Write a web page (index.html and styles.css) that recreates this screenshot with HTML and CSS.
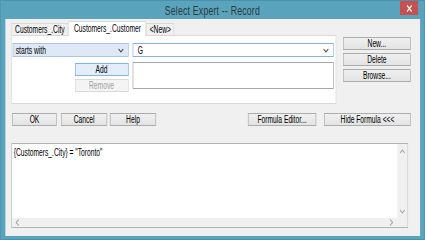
FILE: index.html
```html
<!DOCTYPE html>
<html>
<head>
  <title>Select Expert -- Record</title>
  <link rel="stylesheet" href="styles.css">
</head>
<body>
  <div class="screen">
    <div class="window">
      <div class="titlebar">
        <span class="title">Select Expert -- Record</span>
        <span class="close">
          <svg width="10" height="7" viewBox="0 0 10 7"><path d="M1.5 0.5 L8.5 6.5 M8.5 0.5 L1.5 6.5" stroke="#fff" stroke-width="1.6"/></svg>
        </span>
      </div>

      <div class="client">
        <div class="top">
          <div class="tabbox">
            <div class="tabs">
              <div class="tab">Customers_.City</div>
              <div class="tab active">Customers_.Customer</div>
              <div class="tab tab-new">&lt;New&gt;</div>
            </div>
            <div class="panel">
              <div class="row">
                <div class="combo">
                  <span>starts with</span>
                  <svg class="chev" width="9" height="5" viewBox="0 0 9 5"><polyline points="1,1 4.5,4 8,1" fill="none" stroke="#444" stroke-width="1.2"/></svg>
                </div>
                <div class="field">
                  <span>G</span>
                  <svg class="chev" width="9" height="5" viewBox="0 0 9 5"><polyline points="1,1 4.5,4 8,1" fill="none" stroke="#444" stroke-width="1.2"/></svg>
                </div>
              </div>
              <div class="row row-list">
                <div class="add-col">
                  <button class="btn btn-default add-btn">Add</button>
                  <button class="btn btn-disabled add-btn remove-btn">Remove</button>
                </div>
                <div class="listbox"></div>
              </div>
            </div>
          </div>

          <div class="side">
            <button class="btn">New...</button>
            <button class="btn">Delete</button>
            <button class="btn">Browse...</button>
          </div>
        </div>

        <div class="actions">
          <button class="btn btn-ok">OK</button>
          <button class="btn btn-cancel">Cancel</button>
          <button class="btn btn-help">Help</button>
          <button class="btn btn-formula">Formula Editor...</button>
          <button class="btn btn-hide">Hide Formula &lt;&lt;&lt;</button>
        </div>

        <div class="formula">
          <div class="formula-text">{Customers_.City} = "Toronto"</div>
          <div class="vscroll">
            <svg width="9" height="5" viewBox="0 0 9 5"><polyline points="1,4 4.5,1 8,4" fill="none" stroke="#a6a6a6" stroke-width="1.2"/></svg>
            <svg width="9" height="5" viewBox="0 0 9 5"><polyline points="1,1 4.5,4 8,1" fill="none" stroke="#a6a6a6" stroke-width="1.2"/></svg>
          </div>
          <div class="hscroll">
            <svg width="6" height="7" viewBox="0 0 6 7"><polyline points="5,0.5 1,3.5 5,6.5" fill="none" stroke="#a6a6a6" stroke-width="1.2"/></svg>
            <svg width="6" height="7" viewBox="0 0 6 7"><polyline points="1,0.5 5,3.5 1,6.5" fill="none" stroke="#a6a6a6" stroke-width="1.2"/></svg>
          </div>
          <div class="corner"></div>
        </div>
      </div>
    </div>
  </div>
</body>
</html>
```

FILE: styles.css
```css
html, body {
  margin: 0;
  height: 100%;
  overflow: hidden;
  background-color: #5aa3bc;
}

body {
  font-family: "Liberation Sans", Arial, sans-serif;
  font-size: 10px;
  color: #000;
}

.screen {
  width: 425px;
  height: 240px;
  overflow: hidden;
}

/* the dialog is drawn at its natural size and squeezed to the narrow capture */
.window {
  width: 634px;
  height: 240px;
  box-sizing: border-box;
  background-color: #5aa3bc;
  border: 1px solid #4a92aa;
  display: flex;
  flex-direction: column;
  transform: scaleX(0.67);
  transform-origin: 0 0;
}

.titlebar {
  height: 18px;
  display: grid;
  grid-template-columns: 1fr auto 1fr;
  align-items: start;
}

.title {
  grid-column: 2;
  font-size: 13px;
  line-height: 19px;
  color: #2b3a40;
  letter-spacing: 0.3px;
}

.close {
  grid-column: 3;
  justify-self: end;
  width: 27px;
  height: 14px;
  margin-right: 9px;
  background-color: #c75050;
  display: flex;
  align-items: center;
  justify-content: center;
}

.client {
  height: 217px;
  margin: 0 6px 0 6.5px;
  padding: 3px 14px 0 9px;
  box-sizing: border-box;
  background-color: #f0f0f0;
}

.top {
  display: flex;
  align-items: flex-start;
}

.tabbox {
  width: 485px;
}

.tabs {
  display: flex;
  align-items: flex-end;
  height: 13px;
  position: relative;
  z-index: 1;
}

.tab {
  height: 11px;
  line-height: 11px;
  padding: 0 5px;
  border: 1px solid #d9d9d9;
  border-bottom: none;
  background-color: #f0f0f0;
  white-space: nowrap;
}

.tab.active {
  height: 14px;
  line-height: 13px;
  padding: 0 7px;
  background-color: #fff;
  margin-bottom: -1px;
}

.tab-new {
  padding: 0 4px;
}

.panel {
  height: 69px;
  box-sizing: border-box;
  border: 1px solid #d9d9d9;
  background-color: #fff;
  padding: 7px 3px 0 1px;
}

.row {
  display: grid;
  grid-template-columns: 173px 300px;
  column-gap: 6px;
}

.row-list {
  margin-top: 5px;
}

.combo, .field {
  height: 14px;
  box-sizing: border-box;
  display: flex;
  align-items: center;
  justify-content: space-between;
  padding: 0 6px 0 4px;
}

.combo {
  background-color: #dfe9f5;
  border: 1px solid #a9c6e6;
}

.field {
  background-color: #fff;
  border: 1px solid #7eb4ea;
  padding-left: 7px;
}

.add-col {
  display: flex;
  flex-direction: column;
  align-items: flex-end;
  padding-top: 1px;
}

.listbox {
  height: 27px;
  box-sizing: border-box;
  border: 1px solid #a6a6a6;
  background-color: #fff;
}

.btn {
  box-sizing: border-box;
  height: 13px;
  padding: 0;
  border: 1px solid #acacac;
  background: linear-gradient(#f0f0f0, #e3e3e3);
  font-family: inherit;
  font-size: 10px;
  line-height: 11px;
  color: #000;
}

.btn-default {
  border-color: #7eb4ea;
  background: #e3eefa;
}

.btn-disabled {
  border-color: #d9d9d9;
  background: #f4f4f4;
  color: #a0a0a0;
}

.add-btn {
  width: 80px;
}

.remove-btn {
  margin-top: 3px;
}

.side {
  margin-left: auto;
  margin-top: 15px;
  width: 101px;
  display: flex;
  flex-direction: column;
  gap: 3px;
}

.actions {
  display: flex;
  margin-top: 9px;
  padding-left: 1.5px;
}

.btn-ok { width: 67px; }
.btn-cancel { width: 69px; margin-left: 6px; }
.btn-help { width: 69px; margin-left: 4px; }
.btn-formula { width: 102px; margin-left: auto; }
.btn-hide { width: 129px; margin-left: 12px; }

.formula {
  margin: 17px 4px 0 0;
  height: 85px;
  box-sizing: border-box;
  border: 1px solid #b4b4b4;
  background-color: #fff;
  display: grid;
  grid-template-columns: 1fr 15px;
  grid-template-rows: 1fr 9px;
}

.formula-text {
  padding: 3px 3px;
  line-height: 11px;
}

.vscroll {
  background-color: #f0f0f0;
  display: flex;
  flex-direction: column;
  justify-content: space-between;
  align-items: center;
  padding: 5px 0 4px;
}

.hscroll {
  background-color: #f0f0f0;
  display: flex;
  justify-content: space-between;
  align-items: center;
  padding: 0 6px 0 5px;
}

.corner {
  background-color: #f0f0f0;
}
```
